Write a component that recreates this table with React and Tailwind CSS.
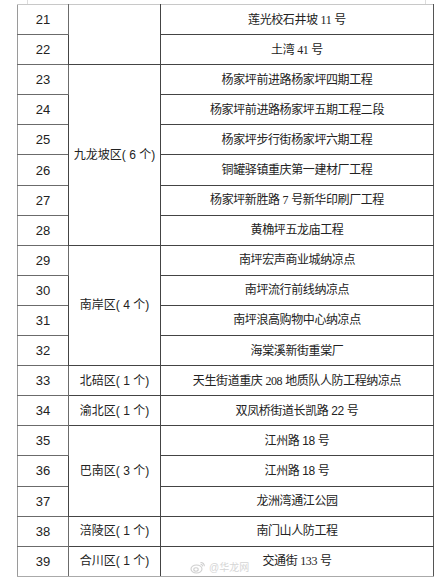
import React from 'react';

const serif = '"Liberation Serif", "Noto Sans CJK SC", serif';

// text parts: strings, or {n: '11'} for serif digits
const rows = [
  { no: 21, addr: ['莲光校石井坡 ', { n: '11' }, ' 号'], district: { label: '', span: 2 } },
  { no: 22, addr: ['土湾 ', { n: '41' }, ' 号'] },
  { no: 23, addr: ['杨家坪前进路杨家坪四期工程'], district: { label: '九龙坡区( 6 个)', span: 6 } },
  { no: 24, addr: ['杨家坪前进路杨家坪五期工程二段'] },
  { no: 25, addr: ['杨家坪步行街杨家坪六期工程'] },
  { no: 26, addr: ['铜罐驿镇重庆第一建材厂工程'] },
  { no: 27, addr: ['杨家坪新胜路 ', { n: '7' }, ' 号新华印刷厂工程'] },
  { no: 28, addr: ['黄桷坪五龙庙工程'] },
  { no: 29, addr: ['南坪宏声商业城纳凉点'], district: { label: '南岸区( 4 个)', span: 4 } },
  { no: 30, addr: ['南坪流行前线纳凉点'] },
  { no: 31, addr: ['南坪浪高购物中心纳凉点'] },
  { no: 32, addr: ['海棠溪新街重棠厂'] },
  { no: 33, addr: ['天生街道重庆 ', { n: '208' }, ' 地质队人防工程纳凉点'], district: { label: '北碚区( 1 个)', span: 1 } },
  { no: 34, addr: ['双凤桥街道长凯路 22 号'], district: { label: '渝北区( 1 个)', span: 1 } },
  { no: 35, addr: ['江州路 18 号'], district: { label: '巴南区( 3 个)', span: 3 } },
  { no: 36, addr: ['江州路 18 号'] },
  { no: 37, addr: ['龙洲湾通江公园'] },
  { no: 38, addr: ['南门山人防工程'], district: { label: '涪陵区( 1 个)', span: 1 } },
  { no: 39, addr: ['交通街 ', { n: '133' }, ' 号'], district: { label: '合川区( 1 个)', span: 1 } },
];

function Addr({ parts }) {
  return parts.map((p, i) =>
    typeof p === 'string' ? (
      <span key={i} className="whitespace-pre">{p}</span>
    ) : (
      <span key={i} className="text-[12px]" style={{ fontFamily: serif }}>{p.n}</span>
    )
  );
}

export default function App() {
  return (
    <div
      className="w-[440px] h-[583px] bg-white relative overflow-hidden text-[#222]"
      style={{ fontFamily: '"Liberation Sans", "Noto Sans CJK SC", sans-serif' }}
    >
      {/* page edge marks above the table */}
      <div className="flex h-[4px]">
        <div className="ml-[27px] w-px h-full bg-[#ddd]" />
        <div className="ml-[397px] w-px h-full bg-[#ddd]" />
      </div>

      <table className="ml-[17px] w-[417px] h-[573px] table-fixed border-collapse">
        <colgroup>
          <col className="w-[51px]" />
          <col className="w-[92px]" />
          <col />
        </colgroup>
        <tbody>
          {rows.map((r, i) => (
            <tr key={r.no}>
              <td
                className={`border border-[#6b6b6b] border-l-[#9a9a9a] text-center text-[13px] leading-none ${
                  i === 0 ? 'border-t-[#c8c8c8]' : ''
                } ${i === rows.length - 1 ? 'border-b-[#aaa]' : ''}`}
              >
                {r.no}
              </td>
              {r.district && (
                <td
                  rowSpan={r.district.span}
                  className={`border border-[#444] text-center text-[12px] whitespace-nowrap ${
                    i === 0 ? 'border-t-[#c8c8c8]' : ''
                  } ${i + r.district.span === rows.length ? 'border-b-[#aaa]' : ''}`}
                >
                  {r.district.label}
                </td>
              )}
              <td
                className={`border border-[#444] border-r-[#555] text-center text-[12px] tracking-[-0.4px] whitespace-nowrap ${
                  i === 0 ? 'border-t-[#c8c8c8]' : ''
                } ${i === rows.length - 1 ? 'border-b-[#aaa]' : ''}`}
              >
                <Addr parts={r.addr} />
              </td>
            </tr>
          ))}
        </tbody>
      </table>

      {/* watermark */}
      <div className="absolute left-[190px] top-[560px] flex items-center gap-[3px] text-[#ccc] text-[10px] opacity-80">
        <svg width="16" height="13" viewBox="0 0 16 13" fill="none" stroke="#c4c4c4" strokeWidth="1.1">
          <ellipse cx="6.5" cy="8" rx="5.5" ry="4" />
          <ellipse cx="6" cy="8.5" rx="2.2" ry="1.7" />
          <path d="M10.5 1.5a3.5 3.5 0 0 1 3.8 3.8" />
          <path d="M10.5 3.3a1.7 1.7 0 0 1 2 2" />
        </svg>
        <span>@华龙网</span>
      </div>
    </div>
  );
}
